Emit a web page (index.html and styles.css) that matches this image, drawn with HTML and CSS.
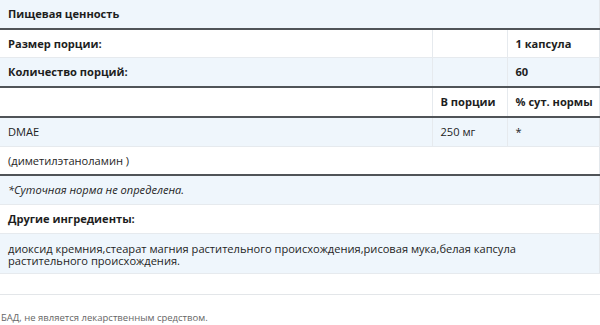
FILE: index.html
```html
<!DOCTYPE html>
<html lang="ru">
<head>
<meta charset="utf-8">
<link rel="stylesheet" href="styles.css">
</head>
<body>
<table class="facts">
  <colgroup><col class="c1"><col class="c2"><col class="c3"></colgroup>
  <tbody>
    <tr class="alt"><th colspan="3" class="title">Пищевая ценность</th></tr>
  </tbody>
  <tbody class="thick">
    <tr><th>Размер порции:</th><td class="blank"></td><th>1 капсула</th></tr>
    <tr class="alt"><th>Количество порций:</th><td class="blank"></td><th>60</th></tr>
  </tbody>
  <tbody class="thick">
    <tr><td class="blank"></td><th>В порции</th><th>% сут. нормы</th></tr>
  </tbody>
  <tbody class="thick">
    <tr class="alt"><td>DMAE</td><td>250 мг</td><td>*</td></tr>
    <tr><td colspan="3">(диметилэтаноламин )</td></tr>
  </tbody>
  <tbody class="thick">
    <tr class="alt"><td colspan="3" class="note">*Суточная норма не определена.</td></tr>
    <tr><th colspan="3">Другие ингредиенты:</th></tr>
    <tr class="alt"><td colspan="3" class="wrap">диоксид кремния,стеарат магния растительного происхождения,рисовая мука,белая капсула растительного происхождения.</td></tr>
  </tbody>
</table>
<hr class="sep">
<p class="disclaimer">БАД, не является лекарственным средством.</p>
</body>
</html>
```
FILE: styles.css
```css
html, body {
  margin: 0;
  padding: 0;
  background: #fff;
}
body {
  font-family: "Open Sans", "Noto Sans", sans-serif;
  color: #1e1e1e;
  width: 600px;
  height: 325px;
  overflow: hidden;
}
.facts {
  width: 599px;
  border-collapse: collapse;
  table-layout: fixed;
  font-size: 11.1px;
  line-height: 12.7px;
  border-right: 1px solid #e3e7eb;
}
.c1 { width: 432px; }
.c2 { width: 75px; }
.c3 { width: 92px; }
.facts th, .facts td {
  text-align: left;
  padding: 8px 8px 7px 8px;
  border-bottom: 1px solid #e6eaee;
  vertical-align: top;
  white-space: nowrap;
}
.facts td.wrap {
  white-space: normal;
  padding-top: 9px;
  padding-bottom: 5px;
  line-height: 12.5px;
}
.facts th { font-weight: 700; }
.facts tr > * + * { border-left: 1px solid #e6eaee; }
.facts tr.alt { background: #eff6fc; }
.facts tbody.thick { border-top: 2px solid #505458; }
.note { font-style: italic; }
.sep {
  margin: 20px 0 0 0;
  border: 0;
  border-top: 1px solid #e3e6e9;
  height: 0;
}
.disclaimer {
  margin: 17px 0 0 1px;
  font-size: 9.5px;
  line-height: 12px;
  color: #666;
}
```
